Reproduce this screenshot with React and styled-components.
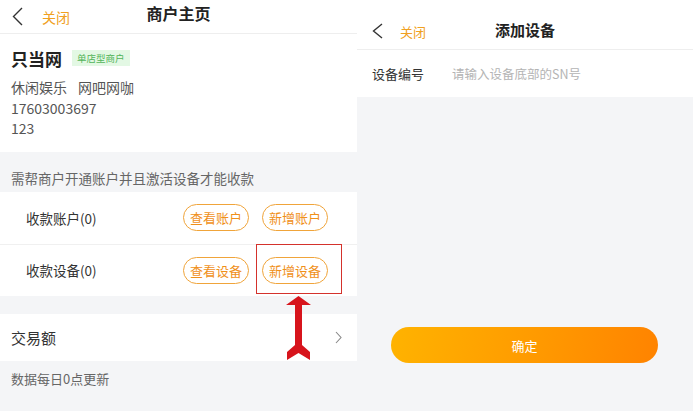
import React from "react";
import styled, { createGlobalStyle } from "styled-components";

const Global = createGlobalStyle`
  html, body { margin: 0; padding: 0; background: #f4f5f7; }
  body { font-family: "Noto Sans CJK SC", "Noto Sans", sans-serif; }
  * { box-sizing: border-box; }
`;

const Screen = styled.div`
  display: flex;
  width: 693px;
  height: 411px;
  overflow: hidden;
  background: #f4f5f7;
`;

const Panel = styled.div`
  position: relative;
  display: flex;
  flex-direction: column;
  width: ${(p) => p.$w};
  flex: ${(p) => (p.$w ? "none" : "1")};
  background: #f4f5f7;
`;

const Header = styled.div`
  position: relative;
  display: flex;
  align-items: center;
  height: ${(p) => p.$h}px;
  padding: ${(p) => p.$pt}px 0 0 ${(p) => p.$pl}px;
  background: #fff;
  border-bottom: 1px solid #eeeeee;
`;

const Back = styled.svg`
  width: 11px;
  height: ${(p) => p.$h}px;
  margin-right: ${(p) => p.$gap}px;
`;

const Close = styled.span`
  font-size: ${(p) => p.$fs}px;
  color: #f0a020;
`;

const Title = styled.div`
  position: absolute;
  left: 0;
  right: 0;
  bottom: ${(p) => p.$b}px;
  text-align: center;
  font-size: ${(p) => p.$fs}px;
  font-weight: 700;
  color: #222;
  pointer-events: none;
`;

const InfoCard = styled.div`
  background: #fff;
  padding: 14px 11px 13px;
`;

const NameRow = styled.div`
  display: flex;
  align-items: center;
  height: 20px;
  gap: 10px;
`;

const Name = styled.span`
  font-size: 17px;
  font-weight: 700;
  color: #222;
`;

const Tag = styled.span`
  display: inline-flex;
  align-items: center;
  height: 16px;
  padding: 0 5px;
  font-size: 9.5px;
  color: #52b45a;
  background: #e3f8e4;
`;

const InfoLines = styled.div`
  margin-top: 9px;
  font-size: 14px;
  line-height: 20.5px;
  color: #555;
`;

const InfoLine = styled.div`
  display: flex;
  gap: 11px;
`;

const Note = styled.div`
  height: ${(p) => p.$h}px;
  padding: ${(p) => p.$pt}px 11px 0;
  font-size: ${(p) => p.$fs}px;
  line-height: 16px;
  color: #666;
`;

const ListCard = styled.div`
  background: #fff;
`;

const Row = styled.div`
  display: flex;
  align-items: center;
  height: 52px;
  padding: 0 29px 0 26px;
  border-top: ${(p) => (p.$divider ? "1px solid #f0f0f0" : "none")};
`;

const RowLabel = styled.span`
  flex: 1;
  font-size: 13.5px;
  color: #333;
`;

const Pill = styled.button`
  height: 27px;
  width: 66px;
  margin-left: 13px;
  padding: 0;
  border: 1px solid #f0a43a;
  border-radius: 14px;
  background: #fff;
  color: #f0901a;
  font-family: inherit;
  font-size: 13px;
`;

const Gap = styled.div`
  height: ${(p) => p.$h}px;
`;

const LinkRow = styled.div`
  display: flex;
  align-items: center;
  justify-content: space-between;
  height: 47px;
  padding: 0 15px 0 11px;
  background: #fff;
  font-size: 15px;
  color: #333;
`;

const Chevron = styled.svg`
  width: 7px;
  height: 13px;
`;

const Highlight = styled.div`
  position: absolute;
  left: 256px;
  top: 244px;
  width: 86px;
  height: 50px;
  border: 1.5px solid #d4322c;
`;

const Arrow = styled.svg`
  position: absolute;
  left: 286px;
  top: 296px;
  width: 25px;
  height: 64px;
`;

const FormRow = styled.div`
  display: flex;
  align-items: center;
  height: 47px;
  padding-left: 15px;
  background: #fff;
`;

const FormLabel = styled.span`
  width: 80px;
  font-size: 13px;
  color: #333;
`;

const FormInput = styled.span`
  font-size: 12.5px;
  color: #b4b4b4;
`;

const Spacer = styled.div`
  flex: 1;
`;

const ConfirmWrap = styled.div`
  padding: 0 35px 48px 34px;
`;

const Confirm = styled.button`
  width: 100%;
  height: 36px;
  border: none;
  border-radius: 18px;
  background: linear-gradient(100deg, #ffb300 0%, #ff9c00 50%, #ff8300 100%);
  color: #fff;
  font-family: inherit;
  font-size: 13px;
`;

const BackIcon = ({ h, gap }) => (
  <Back viewBox={`0 0 11 ${h}`} $h={h} $gap={gap}>
    <path
      d={`M10 1 L1.5 ${h / 2} L10 ${h - 1}`}
      fill="none"
      stroke="#333"
      strokeWidth="1.4"
    />
  </Back>
);

export default function App() {
  return (
    <>
      <Global />
      <Screen>
        <Panel $w="357px">
          <Header $h={34} $pt={0} $pl={12}>
            <BackIcon h={19} gap={19} />
            <Close $fs={14}>关闭</Close>
            <Title $b={8} $fs={16}>商户主页</Title>
          </Header>
          <InfoCard>
            <NameRow>
              <Name>只当网</Name>
              <Tag>单店型商户</Tag>
            </NameRow>
            <InfoLines>
              <InfoLine>
                <span>休闲娱乐</span>
                <span>网吧网咖</span>
              </InfoLine>
              <InfoLine>17603003697</InfoLine>
              <InfoLine>123</InfoLine>
            </InfoLines>
          </InfoCard>
          <Note $h={40} $pt={18} $fs={13.5}>需帮商户开通账户并且激活设备才能收款</Note>
          <ListCard>
            <Row>
              <RowLabel>收款账户(0)</RowLabel>
              <Pill>查看账户</Pill>
              <Pill>新增账户</Pill>
            </Row>
            <Row $divider>
              <RowLabel>收款设备(0)</RowLabel>
              <Pill>查看设备</Pill>
              <Pill>新增设备</Pill>
            </Row>
          </ListCard>
          <Gap $h={18} />
          <LinkRow>
            <span>交易额</span>
            <Chevron viewBox="0 0 7 13">
              <path d="M1 1 L6 6.5 L1 12" fill="none" stroke="#888" strokeWidth="1.1" />
            </Chevron>
          </LinkRow>
          <Note $h={40} $pt={10} $fs={13}>数据每日0点更新</Note>
          <Highlight />
          <Arrow viewBox="0 0 25 64">
            <path
              d="M12.5 0 L25 9 L16 9 L16 49 L24 56 L24 64 L12.5 57 L1 64 L1 56 L9 49 L9 9 L0 9 Z"
              fill="#d7141c"
            />
          </Arrow>
        </Panel>
        <Panel>
          <Header $h={50} $pt={13} $pl={15}>
            <BackIcon h={16} gap={17} />
            <Close $fs={13}>关闭</Close>
            <Title $b={9} $fs={15}>添加设备</Title>
          </Header>
          <FormRow>
            <FormLabel>设备编号</FormLabel>
            <FormInput>请输入设备底部的SN号</FormInput>
          </FormRow>
          <Spacer />
          <ConfirmWrap>
            <Confirm>确定</Confirm>
          </ConfirmWrap>
        </Panel>
      </Screen>
    </>
  );
}
